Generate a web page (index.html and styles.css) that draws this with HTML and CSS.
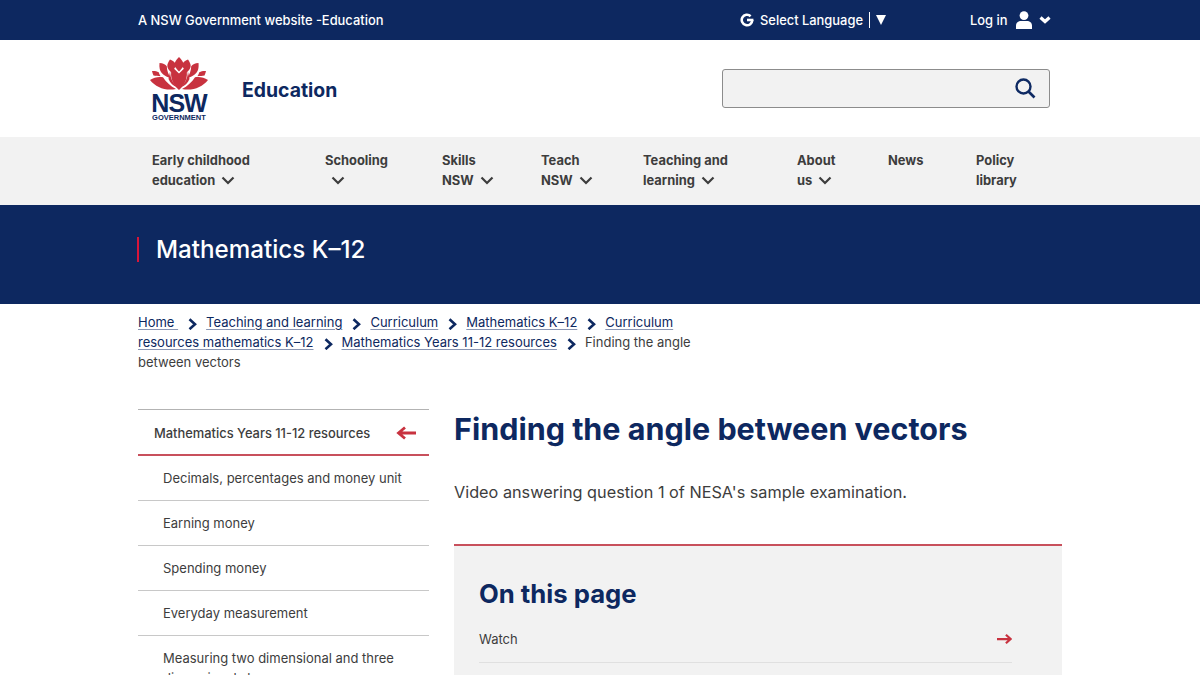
FILE: index.html
```html
<!DOCTYPE html>
<html lang="en">
<head>
<meta charset="utf-8">
<title>Finding the angle between vectors</title>
<link rel="stylesheet" href="styles.css">
</head>
<body>
<div class="topbar">
  <div class="topbar-in">
    <span class="gov">A NSW Government website -Education</span>
    <div class="lang">
      <svg class="g-icon" viewBox="0 0 24 24" width="14" height="14"><path fill="none" stroke="#fff" stroke-width="4.4" d="M21 12a9 9 0 1 1-2.8-6.5"/><path fill="#fff" d="M12 9.8h11v4.400H12z"/></svg>
      <span>Select Language</span>
      <span class="sep"></span>
      <span class="tri"></span>
    </div>
    <div class="login">
      <span>Log in</span>
      <svg viewBox="0 0 18 18" width="18" height="18"><circle cx="9" cy="4.600" r="4.400" fill="#fff"/><path fill="#fff" d="M1 18v-3.200C1 11.600 3.400 10 6 10h6c2.600 0 5 1.600 5 4.800V18z"/></svg>
      <svg class="login-chev" viewBox="0 0 12 8" width="12" height="8"><path fill="none" stroke="#fff" stroke-width="3.200" d="M1.500 1.500 6 5.500l4.500-4"/></svg>
    </div>
  </div>
</div>
<header class="masthead">
  <div class="masthead-in">
    <svg class="logo" viewBox="0 0 58 68" width="58" height="68">
      <defs>
        <g id="half">
          <path d="M20 5.500c3 1 5.500 3 6.300 6-2 2.500-3.300 5-3.500 7.800-3-2-5.500-4.300-5.500-7.300 0-2.300 1.300-4.500 2.700-6.500z"/>
          <path d="M9.500 9c3.500.3 6 1.300 7.300 3.200 0 4 1.500 8.300 4 11.800-5.500-1.500-10-4.300-11-8.800-.5-2-.5-4-.3-6.200z"/>
          <path d="M2 17c2.500-.3 4.600.2 6.700 1.300.4 1.400 1 2.700 1.900 4-2.800-.3-5-.4-7.100-.8-.7-1.500-1.200-2.900-1.500-4.500z"/>
          <path d="M0 26c4-2.700 9-3.700 13-2.700 3 4.700 7.500 9 13 11.700-10.500 2-20-1.500-26-9z"/>
          <path d="M21 13c-1.800 5.500-.8 13.500 6 20-3.500-1-7-4-8.500-8l2.500-12z"/>
        </g>
      </defs>
      <g fill="#c8323f">
        <path d="M29 3c2.800 2.700 4.500 5.200 4.500 7.800 0 1.400-.8 3-4.500 6.700-3.700-3.700-4.500-5.300-4.500-6.700 0-2.600 1.700-5.100 4.500-7.800z"/>
        <path d="M29 19.500c2.500-2.300 5-4.500 6.400-6.700 3 6.500 2 16-6.400 23.200-8.400-7.200-9.400-16.700-6.400-23.200 1.400 2.200 3.900 4.400 6.400 6.700z"/>
        <use href="#half"/>
        <use href="#half" transform="matrix(-1 0 0 1 58 0)"/>
      </g>
      <text class="logo-nsw" x="29" y="58" text-anchor="middle">NSW</text>
      <text class="logo-sub" x="29" y="66" text-anchor="middle">GOVERNMENT</text>
    </svg>
    <span class="sitename">Education</span>
    <div class="search">
      <svg viewBox="0 0 22 22" width="22" height="22"><circle cx="9.500" cy="9.500" r="7" fill="none" stroke="#0e2a63" stroke-width="2.400"/><path d="m14.500 14.500 6 6" stroke="#0e2a63" stroke-width="2.600" fill="none"/></svg>
    </div>
  </div>
</header>
<nav class="nav">
  <div class="nav-in">
    <a>Early childhood<br>education <svg class="chev" viewBox="0 0 14 9"><path d="M1.500 1.500 7 7l5.500-5.500"/></svg></a>
    <a>Schooling<br><svg class="chev chev-solo" viewBox="0 0 14 9"><path d="M1.500 1.500 7 7l5.500-5.500"/></svg></a>
    <a>Skills<br>NSW <svg class="chev" viewBox="0 0 14 9"><path d="M1.500 1.500 7 7l5.500-5.500"/></svg></a>
    <a>Teach<br>NSW <svg class="chev" viewBox="0 0 14 9"><path d="M1.500 1.500 7 7l5.500-5.500"/></svg></a>
    <a>Teaching and<br>learning <svg class="chev" viewBox="0 0 14 9"><path d="M1.500 1.500 7 7l5.500-5.500"/></svg></a>
    <a>About<br>us <svg class="chev" viewBox="0 0 14 9"><path d="M1.500 1.500 7 7l5.500-5.500"/></svg></a>
    <a>News</a>
    <a>Policy<br>library</a>
  </div>
</nav>
<section class="banner">
  <div class="banner-in"><h2 class="banner-title">Mathematics K–12</h2></div>
</section>
<div class="crumbs">
  <a>Home&nbsp;</a><svg class="sep-c" viewBox="0 0 9 12"><path d="M1.500 1.200 7 6.200l-5.500 5"/></svg><a>Teaching and learning</a><svg class="sep-c" viewBox="0 0 9 12"><path d="M1.500 1.200 7 6.200l-5.500 5"/></svg><a>Curriculum</a><svg class="sep-c" viewBox="0 0 9 12"><path d="M1.500 1.200 7 6.200l-5.500 5"/></svg><a>Mathematics K–12</a><svg class="sep-c" viewBox="0 0 9 12"><path d="M1.500 1.200 7 6.200l-5.500 5"/></svg><a>Curriculum resources mathematics K–12</a><svg class="sep-c" viewBox="0 0 9 12"><path d="M1.500 1.200 7 6.200l-5.500 5"/></svg><a>Mathematics Years 11-12 resources</a><svg class="sep-c" viewBox="0 0 9 12"><path d="M1.500 1.200 7 6.200l-5.500 5"/></svg><span>Finding the angle between vectors</span>
</div>
<main class="layout">
  <aside class="side">
    <div class="side-head">
      <span>Mathematics Years 11-12 resources</span>
      <svg viewBox="0 0 20 14" width="20" height="14"><path d="M20 7H3M9 1.500 2.500 7 9 12.500" fill="none" stroke="#c8323f" stroke-width="2.800"/></svg>
    </div>
    <ul class="side-list">
      <li>Decimals, percentages and money unit</li>
      <li>Earning money</li>
      <li>Spending money</li>
      <li>Everyday measurement</li>
      <li>Measuring two dimensional and three dimensional shapes</li>
    </ul>
  </aside>
  <article class="main">
    <h1 class="title">Finding the angle between vectors</h1>
    <p class="lead">Video answering question 1 of NESA's sample examination.</p>
    <section class="toc">
      <h2 class="toc-title">On this page</h2>
      <div class="toc-row">
        <span>Watch</span>
        <svg viewBox="0 0 16 12" width="15" height="12"><path d="M0 6h14M9.500 1.500l5 4.500-5 4.500" fill="none" stroke="#c8323f" stroke-width="2.400"/></svg>
      </div>
    </section>
  </article>
</main>
</body>
</html>
```
FILE: styles.css
```css
* { box-sizing: border-box; }
html, body { margin: 0; height: 675px; overflow: hidden; }
body { font-family: "Inter", "Liberation Sans", sans-serif; color: #3d3d3d; background: #fff; }
.topbar { background: #0d2860; height: 40px; color: #fff; font-size: 12.9px; font-weight: 500; }
.topbar-in { display: flex; align-items: center; height: 40px; padding-left: 138px; }
.gov { width: 602px; }
.lang { display: flex; align-items: center; width: 230px; }
.g-icon { margin-right: 6px; }
.sep { width: 1px; height: 16px; background: #fff; margin: 0 6px; }
.tri { width: 0; height: 0; border-left: 5px solid transparent; border-right: 5px solid transparent; border-top: 10px solid #fff; }
.login { display: flex; align-items: center; }
.login svg { margin-left: 7px; }
.login svg.login-chev { margin-left: 6px; }
.masthead { height: 97px; }
.masthead-in { display: flex; align-items: center; height: 97px; padding-left: 150px; }
.logo { flex: none; margin-top: -1px; }
.logo-nsw { font: 700 25px "Liberation Sans", sans-serif; fill: #0d2860; letter-spacing: -1px; }
.logo-sub { font: 700 7.500px "Liberation Sans", sans-serif; fill: #0d2860; }
.sitename { margin-left: 34px; font-size: 19.400px; font-weight: 700; color: #0d2860; width: 480px; margin-top: 3px; }
.search { width: 328px; height: 39px; margin-top: -1px; background: #f2f2f2; border: 1px solid #8c8c8c; border-radius: 3px; display: flex; align-items: center; justify-content: flex-end; padding-right: 13px; }
.nav { background: #f2f2f2; height: 68px; }
.nav-in { display: grid; grid-template-columns: 173px 117px 99px 102px 154px 91px 88px auto; padding: 14px 0 0 152px; font-size: 12.900px; font-weight: 700; line-height: 20px; color: #3d3d3d; }
.chev { width: 14px; height: 9px; margin-left: 3px; fill: none; stroke: #3d3d3d; stroke-width: 2.200; }
.chev-solo { margin-left: 6px; }
.banner { background: #0d2860; height: 99px; }
.banner-in { padding: 32px 0 0 137px; }
.banner-title { margin: 0; height: 25px; border-left: 2px solid #d7153a; padding-left: 17px; color: #fff; font-size: 24.200px; line-height: 25px; font-weight: 500; }
.crumbs { width: 570px; margin-left: 138px; padding-top: 8px; font-size: 13px; line-height: 20px; color: #3d3d3d; }
.crumbs a { color: #0d2860; text-decoration: underline; text-decoration-color: #8a96b3; text-underline-offset: 2px; }
.sep-c { width: 9px; height: 12px; margin: 0 9px 0 10px; vertical-align: -3px; fill: none; stroke: #0d2860; stroke-width: 2.600; }
.layout { display: flex; margin: 37px 0 0 138px; }
.side { width: 291px; flex: none; font-size: 13px; }
.side-head { display: flex; align-items: center; justify-content: space-between; height: 47px; padding: 1px 13px 0 16px; border-top: 1px solid #b3b3b3; border-bottom: 2px solid #c8505c; font-weight: 500; font-size: 12.900px; }
.side-head span { padding-top: 2px; }
.side-list { list-style: none; margin: 0; padding: 0; }
.side-list li { padding: 12px 20px 12px 25px; line-height: 20px; border-bottom: 1px solid #c8c8c8; }
.main { width: 608px; margin-left: 25px; }
.title { margin: 0; color: #0d2860; font-size: 30.500px; line-height: 40px; font-weight: 700; }
.lead { margin: 31px 0 0; font-size: 16.250px; line-height: 24px; }
.toc { margin-top: 40px; height: 200px; background: #f2f2f2; border-top: 2px solid #c8505c; padding: 31px 50px 0 25px; }
.toc-title { margin: 0; color: #0d2860; font-size: 25.700px; line-height: 34px; font-weight: 700; }
.toc-row { display: flex; align-items: center; justify-content: space-between; height: 50px; margin-top: 2px; padding-top: 2px; border-bottom: 1px solid #e0e0e0; font-size: 13px; }
```
